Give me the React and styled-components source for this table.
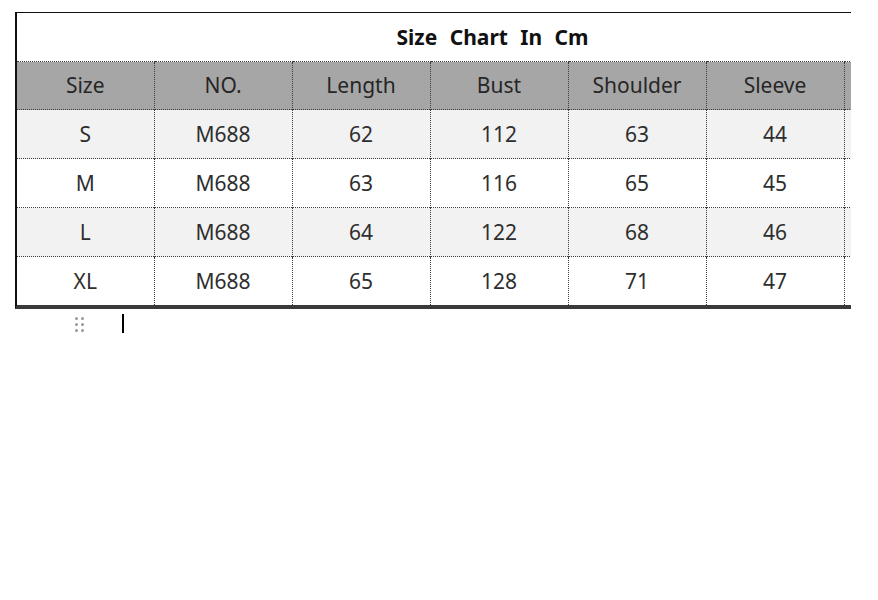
import styled, { createGlobalStyle } from "styled-components";

const GlobalStyle = createGlobalStyle`
  html, body {
    margin: 0;
    background: #ffffff;
  }
  body {
    font-family: "Noto Sans", "Open Sans", Arial, sans-serif;
  }
`;

const Page = styled.div`
  padding: 12px 0 0 15px;
`;

const Frame = styled.div`
  position: relative;
  width: 836px;
  overflow: hidden;
  border-top: 1px solid #111;
  border-left: 2px solid #111;
  border-bottom: 4px solid #3a3a3a;
  box-sizing: border-box;
`;

const Table = styled.table`
  border-collapse: collapse;
  table-layout: fixed;
  width: 951px;
`;

const Col = styled.col`
  width: ${(p) => p.$w}px;
`;

const TitleCell = styled.td`
  height: 48px;
  padding: 0;
  text-align: center;
  font-size: 21px;
  font-weight: 700;
  color: #111;
  word-spacing: 7px;
  background: #fff;
`;

const Row = styled.tr`
  background: ${(p) => p.$bg};
`;

const Cell = styled.td`
  height: ${(p) => (p.$head ? 47 : 48)}px;
  padding: 0;
  text-align: center;
  font-size: 21px;
  color: ${(p) => (p.$head ? "#262626" : "#2e2e2e")};
  border-top: 1px dotted #3c3c3c;
  border-left: ${(p) => (p.$first ? "none" : "1px dotted #3c3c3c")};
  line-height: 1;
`;

const GreenMark = styled.span`
  position: absolute;
  left: 137px;
  bottom: -4px;
  width: 6px;
  height: 3px;
  background: #1aa31a;
`;

const Below = styled.div`
  display: flex;
  align-items: center;
  gap: 38px;
  padding: 5px 0 0 60px;
`;

const Handle = styled.div`
  display: grid;
  grid-template-columns: repeat(2, 3px);
  grid-auto-rows: 3px;
  gap: 3px 3px;
  padding-top: 1px;
  span {
    width: 3px;
    height: 3px;
    border-radius: 50%;
    background: #9a9a9a;
  }
`;

const Caret = styled.div`
  width: 2px;
  height: 19px;
  background: #000;
`;

const widths = [137, 138, 138, 138, 138, 138, 124];
const headers = ["Size", "NO.", "Length", "Bust", "Shoulder", "Sleeve", ""];
const rows = [
  ["S", "M688", "62", "112", "63", "44", ""],
  ["M", "M688", "63", "116", "65", "45", ""],
  ["L", "M688", "64", "122", "68", "46", ""],
  ["XL", "M688", "65", "128", "71", "47", ""],
];

export default function App() {
  return (
    <Page>
      <GlobalStyle />
      <Frame>
        <Table>
          <colgroup>
            {widths.map((w, i) => (
              <Col key={i} $w={w} />
            ))}
          </colgroup>
          <tbody>
            <tr>
              <TitleCell colSpan={7}>Size Chart In Cm</TitleCell>
            </tr>
            <Row $bg="#a6a6a6">
              {headers.map((h, i) => (
                <Cell key={i} $head $first={i === 0}>
                  {h}
                </Cell>
              ))}
            </Row>
            {rows.map((r, ri) => (
              <Row key={ri} $bg={ri % 2 === 0 ? "#f2f2f2" : "#ffffff"}>
                {r.map((v, i) => (
                  <Cell key={i} $first={i === 0}>
                    {v}
                  </Cell>
                ))}
              </Row>
            ))}
          </tbody>
        </Table>
        <GreenMark />
      </Frame>
      <Below>
        <Handle>
          {Array.from({ length: 6 }).map((_, i) => (
            <span key={i} />
          ))}
        </Handle>
        <Caret />
      </Below>
    </Page>
  );
}
